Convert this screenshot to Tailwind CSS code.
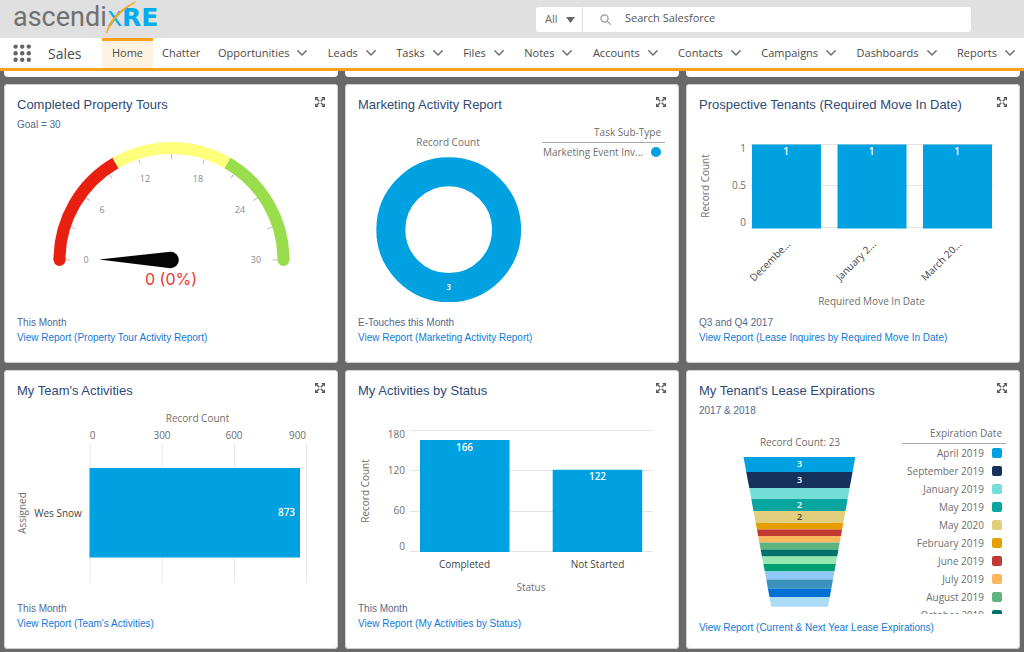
<!DOCTYPE html>
<html lang="en">
<head>
<meta charset="utf-8">
<title>Sales Home</title>
<script src="https://cdn.jsdelivr.net/npm/@tailwindcss/browser@4"></script>
</head>
<body class="min-h-screen bg-[#696969] font-['Liberation_Sans',sans-serif]">
<svg class="hidden">
  <symbol id="chev" viewBox="0 0 10 6"><path d="M0.8 0.8L5 5L9.2 0.8" fill="none" stroke="#6f6f6f" stroke-width="1.5" stroke-linecap="round" stroke-linejoin="round"/></symbol>
  <symbol id="expand" viewBox="0 0 10 10">
    <path d="M0 0h3.8L0 3.8zM10 0v3.8L6.2 0zM0 10V6.200l3.800 3.800zM10 10H6.200L10 6.200z" fill="#555"/>
    <path d="M1 1l3.200 3.200M9 1L5.800 4.200M1 9l3.200-3.200M9 9L5.800 5.800" stroke="#666" stroke-width="1.600"/>
  </symbol>
</svg>

<header class="flex h-[38px] items-center bg-[#e0e0e0]">
  <a href="#" aria-label="ascendixRE" class="block h-[38px] w-[170px] shrink-0">
    <svg viewBox="0 0 170 38" class="block h-full w-full">
      <text x="13" y="26" font-size="27" class="font-['Roboto',sans-serif]" fill="#707070">ascendi</text>
      <text x="107" y="26" font-size="26" class="font-['DejaVu_Sans',sans-serif]" fill="#00aeef">x</text>
      <text x="122" y="26" font-size="25" class="font-['DejaVu_Sans',sans-serif] font-bold" fill="#00aeef">RE</text>
      <path d="M135.500 2C121 9 110 19 106.500 33C111.500 20 121 10 135.500 2z" fill="#f9a61a" stroke="#f9a61a" stroke-width="1.200"/>
    </svg>
  </a>
  <form class="mr-[53px] ml-auto flex h-[25px] w-[435px] items-center rounded-[3px] bg-white font-['Open_Sans',sans-serif] text-[11px] text-[#555]">
    <div class="relative h-full w-[47px] border-r border-[#ddd]">
      <select aria-label="Search scope" class="h-full w-full appearance-none pl-[9px] text-[#666] outline-none"><option>All</option></select>
      <svg class="pointer-events-none absolute top-[10px] right-[7px] h-[6px] w-[9px]" viewBox="0 0 9 6"><path d="M0 0h9L4.500 6z" fill="#666"/></svg>
    </div>
    <svg class="ml-[17px] h-[11px] w-[11px]" viewBox="0 0 11 11"><g fill="none" stroke="#999" stroke-width="1.200"><circle cx="4.500" cy="4.500" r="3.600"/><path d="M7.200 7.200L10.400 10.400" stroke-linecap="round"/></g></svg>
    <input aria-label="Search Salesforce" placeholder="Search Salesforce" class="ml-[14px] h-full flex-1 pb-[3px] text-[#555] outline-none placeholder:text-[#555]">
  </form>
</header>

<nav class="flex h-[33px] items-stretch overflow-hidden border-b-3 border-[#fb9f1c] bg-white font-['Open_Sans',sans-serif] text-[11px] whitespace-nowrap text-[#4a4a4a]">
  <button aria-label="App launcher" class="ml-[13px] flex w-[18px] items-center">
    <svg viewBox="0 0 18 18" class="h-[18px] w-[18px]" fill="#666"><circle cx="2.600" cy="2.600" r="2.200"/><circle cx="9.200" cy="2.600" r="2.200"/><circle cx="15.800" cy="2.600" r="2.200"/><circle cx="2.600" cy="9.200" r="2.200"/><circle cx="9.200" cy="9.200" r="2.200"/><circle cx="15.800" cy="9.200" r="2.200"/><circle cx="2.600" cy="15.800" r="2.200"/><circle cx="9.200" cy="15.800" r="2.200"/><circle cx="15.800" cy="15.800" r="2.200"/></svg>
  </button>
  <span class="ml-[17px] flex w-[54px] items-center text-[14px]">Sales</span>
  <a href="#" class="flex w-[51px] items-center justify-center border-t-3 border-[#fb9f1c] bg-[#fef3e1] pb-[3px]">Home</a>
  <a href="#" class="ml-[9px] flex w-[56px] items-center">Chatter</a>
  <div class="flex flex-1 items-center justify-between pr-[9px]">
    <a href="#" class="flex items-center gap-2">Opportunities<svg class="h-[6px] w-[10px]"><use href="#chev"/></svg></a>
    <a href="#" class="flex items-center gap-2">Leads<svg class="h-[6px] w-[10px]"><use href="#chev"/></svg></a>
    <a href="#" class="flex items-center gap-2">Tasks<svg class="h-[6px] w-[10px]"><use href="#chev"/></svg></a>
    <a href="#" class="flex items-center gap-2">Files<svg class="h-[6px] w-[10px]"><use href="#chev"/></svg></a>
    <a href="#" class="flex items-center gap-2">Notes<svg class="h-[6px] w-[10px]"><use href="#chev"/></svg></a>
    <a href="#" class="flex items-center gap-2">Accounts<svg class="h-[6px] w-[10px]"><use href="#chev"/></svg></a>
    <a href="#" class="flex items-center gap-2">Contacts<svg class="h-[6px] w-[10px]"><use href="#chev"/></svg></a>
    <a href="#" class="flex items-center gap-2">Campaigns<svg class="h-[6px] w-[10px]"><use href="#chev"/></svg></a>
    <a href="#" class="flex items-center gap-2">Dashboards<svg class="h-[6px] w-[10px]"><use href="#chev"/></svg></a>
    <a href="#" class="flex items-center gap-2">Reports<svg class="h-[6px] w-[10px]"><use href="#chev"/></svg></a>
  </div>
</nav>

<main class="grid grid-cols-3 gap-[7px] px-1 pb-[3px]">
  <div class="h-[6px] rounded-b-[4px] bg-white"></div>
  <div class="h-[6px] rounded-b-[4px] bg-white"></div>
  <div class="h-[6px] rounded-b-[4px] bg-white"></div>

  <section class="rounded-[4px] bg-white pt-3 pb-[18px] inset-ring inset-ring-[#d0d0d0]">
    <div class="flex items-start justify-between px-[13px]">
      <div><h2 class="text-[13px] leading-[18px] text-[#2f4a75]">Completed Property Tours</h2>
      <p class="mt-[3px] text-[10px] leading-4 text-[#54698d]">Goal = 30</p></div>
      <button aria-label="Expand" class="mt-[1px]"><svg class="h-[10px] w-[10px]"><use href="#expand"/></svg></button>
    </div>
    <svg viewBox="4 133 334 182" class="block w-full font-['Open_Sans',sans-serif]" text-anchor="middle">
      <g fill="none" stroke-width="12">
        <path d="M59.500 260A112 112 0 0 1 59.500 259" stroke="#e91f10" stroke-linecap="round"/>
        <path d="M283.500 260A112 112 0 0 0 283.500 259" stroke="#99dc4c" stroke-linecap="round"/>
        <path d="M59.500 260A112 112 0 0 1 115.500 163" stroke="#e91f10"/>
        <path d="M115.500 163A112 112 0 0 1 227.500 163" stroke="#ffff7d"/>
        <path d="M227.500 163A112 112 0 0 1 283.500 260" stroke="#99dc4c"/>
      </g>
      <g stroke="#bbb" stroke-width="1">
        <path id="tick" d="M66 260h4.500"/>
        <use href="#tick" transform="rotate(18 171.500 260)"/><use href="#tick" transform="rotate(36 171.500 260)"/><use href="#tick" transform="rotate(54 171.500 260)"/><use href="#tick" transform="rotate(72 171.500 260)"/><use href="#tick" transform="rotate(90 171.500 260)"/><use href="#tick" transform="rotate(108 171.500 260)"/><use href="#tick" transform="rotate(126 171.500 260)"/><use href="#tick" transform="rotate(144 171.500 260)"/><use href="#tick" transform="rotate(162 171.500 260)"/><use href="#tick" transform="rotate(180 171.500 260)"/>
      </g>
      <path d="M99 259.500L170.500 251.700A8.300 8.300 0 1 1 170.500 268.300z" fill="#050505"/>
      <g font-size="9" fill="#888"><text x="86" y="263">0</text><text x="102" y="213">6</text><text x="145" y="182">12</text><text x="198" y="182">18</text><text x="240" y="213">24</text><text x="256" y="263">30</text></g>
      <text x="171" y="285" font-size="16" fill="#e8382c" class="font-['Inter',sans-serif]">0 (0%)</text>
    </svg>
    <div class="px-[13px] text-[10px] leading-[15px]"><p class="text-[#54698d]">This Month</p><p><a href="#" class="text-[#1079d8]">View Report (Property Tour Activity Report)</a></p></div>
  </section>

  <section class="rounded-[4px] bg-white pt-3 pb-[18px] inset-ring inset-ring-[#d0d0d0]">
    <div class="flex items-start justify-between px-[13px]">
      <h2 class="text-[13px] leading-[18px] text-[#2f4a75]">Marketing Activity Report</h2>
      <button aria-label="Expand" class="mt-[1px]"><svg class="h-[10px] w-[10px]"><use href="#expand"/></svg></button>
    </div>
    <div class="flex items-start pr-[14px] font-['Open_Sans',sans-serif] text-[10px] text-[#706e6b]">
      <svg viewBox="345 114 197 201" class="block min-w-0 flex-1" text-anchor="middle">
        <text x="448" y="146" font-size="10" fill="#706e6b">Record Count</text>
        <circle cx="448.700" cy="229.700" r="57.900" fill="none" stroke="#00a1e0" stroke-width="29"/>
        <text x="448.700" y="290" font-size="8" class="font-semibold" fill="#fff">3</text>
      </svg>
      <div class="w-[123px] pt-[10px] text-right">
        <p class="border-b border-[#a8a8a8] pr-1 pb-[2px] leading-4">Task Sub-Type</p>
        <p class="flex items-center justify-end gap-2 pr-1 leading-[18px] whitespace-nowrap">Marketing Event Inv...<span class="size-[10px] rounded-full bg-[#00a1e0]"></span></p>
      </div>
    </div>
    <div class="px-[13px] text-[10px] leading-[15px]"><p class="text-[#54698d]">E-Touches this Month</p><p><a href="#" class="text-[#1079d8]">View Report (Marketing Activity Report)</a></p></div>
  </section>

  <section class="rounded-[4px] bg-white pt-3 pb-[18px] inset-ring inset-ring-[#d0d0d0]">
    <div class="flex items-start justify-between px-[13px]">
      <h2 class="text-[13px] leading-[18px] text-[#2f4a75]">Prospective Tenants (Required Move In Date)</h2>
      <button aria-label="Expand" class="mt-[1px]"><svg class="h-[10px] w-[10px]"><use href="#expand"/></svg></button>
    </div>
    <svg viewBox="686 114 334 201" class="block w-full font-['Open_Sans',sans-serif]" font-size="10" fill="#706e6b">
      <path d="M750 144.500h244M750 185.500h244M750 227.500h244" stroke="#e3e3e3"/>
      <path d="M752 144.500h69v84h-69zM837.500 144.500h69v84h-69zM923 144.500h69v84h-69z" fill="#00a1e0"/>
      <g text-anchor="end"><text x="746" y="152">1</text><text x="746" y="189">0.5</text><text x="746" y="226">0</text></g>
      <g text-anchor="middle"><text transform="translate(709 186) rotate(-90)">Record Count</text><text x="871.500" y="305">Required Move In Date</text></g>
      <g text-anchor="middle" fill="#fff" class="font-semibold"><text x="786" y="155">1</text><text x="871.500" y="155">1</text><text x="957" y="155">1</text></g>
      <g text-anchor="end" fill="#444"><text transform="translate(791 245) rotate(-45)">Decembe...</text><text transform="translate(876.500 245) rotate(-45)">January 2...</text><text transform="translate(962 245) rotate(-45)">March 20...</text></g>
    </svg>
    <div class="px-[13px] text-[10px] leading-[15px]"><p class="text-[#54698d]">Q3 and Q4 2017</p><p><a href="#" class="text-[#1079d8]">View Report (Lease Inquires by Required Move In Date)</a></p></div>
  </section>

  <section class="rounded-[4px] bg-white pt-3 pb-[18px] inset-ring inset-ring-[#d0d0d0]">
    <div class="flex items-start justify-between px-[13px]">
      <h2 class="text-[13px] leading-[18px] text-[#2f4a75]">My Team's Activities</h2>
      <button aria-label="Expand" class="mt-[1px]"><svg class="h-[10px] w-[10px]"><use href="#expand"/></svg></button>
    </div>
    <svg viewBox="4 400 334 201" class="block w-full font-['Open_Sans',sans-serif]" font-size="10" fill="#706e6b" text-anchor="middle">
      <path d="M90 444v139M162 444v139M234.500 444v139M306.500 444v139" stroke="#e6e6e6"/>
      <path d="M89.500 468h210.500v89.500h-210.500z" fill="#00a1e0"/>
      <text x="197.500" y="422">Record Count</text>
      <text x="92.500" y="439">0</text><text x="162" y="439">300</text><text x="234" y="439">600</text><text x="297.500" y="439">900</text>
      <text transform="translate(26 513) rotate(-90)">Assigned</text>
      <text x="58" y="517" fill="#444">Wes Snow</text>
      <text x="286.500" y="516" fill="#fff" class="font-semibold">873</text>
    </svg>
    <div class="px-[13px] text-[10px] leading-[15px]"><p class="text-[#54698d]">This Month</p><p><a href="#" class="text-[#1079d8]">View Report (Team's Activities)</a></p></div>
  </section>

  <section class="rounded-[4px] bg-white pt-3 pb-[18px] inset-ring inset-ring-[#d0d0d0]">
    <div class="flex items-start justify-between px-[13px]">
      <h2 class="text-[13px] leading-[18px] text-[#2f4a75]">My Activities by Status</h2>
      <button aria-label="Expand" class="mt-[1px]"><svg class="h-[10px] w-[10px]"><use href="#expand"/></svg></button>
    </div>
    <svg viewBox="345 400 334 201" class="block w-full font-['Open_Sans',sans-serif]" font-size="10" fill="#706e6b" text-anchor="middle">
      <path d="M410 430.500h243M410 470.500h243M410 511.500h243M410 551.500h243" stroke="#e3e3e3"/>
      <path d="M420 440h89.500v112h-89.500zM552.700 469.700h89.500v82.300h-89.500z" fill="#00a1e0"/>
      <g text-anchor="end"><text x="405" y="438">180</text><text x="405" y="474">120</text><text x="405" y="514">60</text><text x="405" y="550">0</text></g>
      <text transform="translate(369 491) rotate(-90)">Record Count</text>
      <g fill="#fff" class="font-semibold"><text x="464.500" y="451">166</text><text x="597.500" y="480">122</text></g>
      <g fill="#444"><text x="464.500" y="568">Completed</text><text x="597.500" y="568">Not Started</text></g>
      <text x="531" y="591">Status</text>
    </svg>
    <div class="px-[13px] text-[10px] leading-[15px]"><p class="text-[#54698d]">This Month</p><p><a href="#" class="text-[#1079d8]">View Report (My Activities by Status)</a></p></div>
  </section>

  <section class="rounded-[4px] bg-white pt-3 pb-[14px] inset-ring inset-ring-[#d0d0d0]">
    <div class="flex items-start justify-between px-[13px]">
      <div><h2 class="text-[13px] leading-[18px] text-[#2f4a75]">My Tenant's Lease Expirations</h2>
      <p class="mt-[3px] text-[10px] leading-4 text-[#54698d]">2017 &amp; 2018</p></div>
      <button aria-label="Expand" class="mt-[1px]"><svg class="h-[10px] w-[10px]"><use href="#expand"/></svg></button>
    </div>
    <div class="flex items-start pr-[14px] font-['Open_Sans',sans-serif] text-[10px] text-[#706e6b]">
      <svg viewBox="686 419 216 195" class="block min-w-0 flex-1" text-anchor="middle">
        <clipPath id="funnel"><path d="M743.500 457H855.300L828 606.700H771.300z"/></clipPath>
        <text x="800" y="446" font-size="10" fill="#706e6b">Record Count: 23</text>
        <g clip-path="url(#funnel)">
          <path d="M740 457h120v15H740z" fill="#00a1e0"/>
          <path d="M740 472h120v16H740z" fill="#16325c"/>
          <path d="M740 488h120v11H740z" fill="#76ded9"/>
          <path d="M740 499h120v12H740z" fill="#08a69e"/>
          <path d="M740 511h120v12H740z" fill="#e2ce7d"/>
          <path d="M740 523h120v6.500H740z" fill="#e69f00"/>
          <path d="M740 529.500h120v6.500H740z" fill="#c23934"/>
          <path d="M740 536h120v6.500H740z" fill="#ffb75d"/>
          <path d="M740 542.500h120v7H740z" fill="#5fb37e"/>
          <path d="M740 549.500h120v7H740z" fill="#00716b"/>
          <path d="M740 556.500h120v7.500H740z" fill="#96e6b0"/>
          <path d="M740 564h120v7.500H740z" fill="#009e73"/>
          <path d="M740 571.500h120v8H740z" fill="#92c7fa"/>
          <path d="M740 579.500h120v9H740z" fill="#3a92bd"/>
          <path d="M740 588.500h120v8.500H740z" fill="#0070d2"/>
          <path d="M740 597h120v10H740z" fill="#aaddf5"/>
        </g>
        <g font-size="9" class="font-semibold" fill="#fff"><text x="799.500" y="467">3</text><text x="799.500" y="483">3</text><text x="799.500" y="508">2</text><text x="799.500" y="520" fill="#444">2</text></g>
      </svg>
      <div class="h-[195px] w-[104px] overflow-hidden pt-[6px] text-right whitespace-nowrap">
        <p class="border-b border-[#a8a8a8] pr-1 pb-[2px] leading-4">Expiration Date</p>
        <ul class="pr-1 leading-[18px]">
          <li class="flex items-center justify-end gap-2">April 2019<span class="size-[10px] rounded-[2px] bg-[#00a1e0]"></span></li>
          <li class="flex items-center justify-end gap-2">September 2019<span class="size-[10px] rounded-[2px] bg-[#16325c]"></span></li>
          <li class="flex items-center justify-end gap-2">January 2019<span class="size-[10px] rounded-[2px] bg-[#76ded9]"></span></li>
          <li class="flex items-center justify-end gap-2">May 2019<span class="size-[10px] rounded-[2px] bg-[#08a69e]"></span></li>
          <li class="flex items-center justify-end gap-2">May 2020<span class="size-[10px] rounded-[2px] bg-[#e2ce7d]"></span></li>
          <li class="flex items-center justify-end gap-2">February 2019<span class="size-[10px] rounded-[2px] bg-[#e69f00]"></span></li>
          <li class="flex items-center justify-end gap-2">June 2019<span class="size-[10px] rounded-[2px] bg-[#c23934]"></span></li>
          <li class="flex items-center justify-end gap-2">July 2019<span class="size-[10px] rounded-[2px] bg-[#ffb75d]"></span></li>
          <li class="flex items-center justify-end gap-2">August 2019<span class="size-[10px] rounded-[2px] bg-[#5fb37e]"></span></li>
          <li class="flex items-center justify-end gap-2">October 2019<span class="size-[10px] rounded-[2px] bg-[#00716b]"></span></li>
        </ul>
      </div>
    </div>
    <p class="mt-[6px] px-[13px] text-[10px] leading-[15px]"><a href="#" class="text-[#1079d8]">View Report (Current &amp; Next Year Lease Expirations)</a></p>
  </section>
</main>
</body>
</html>
